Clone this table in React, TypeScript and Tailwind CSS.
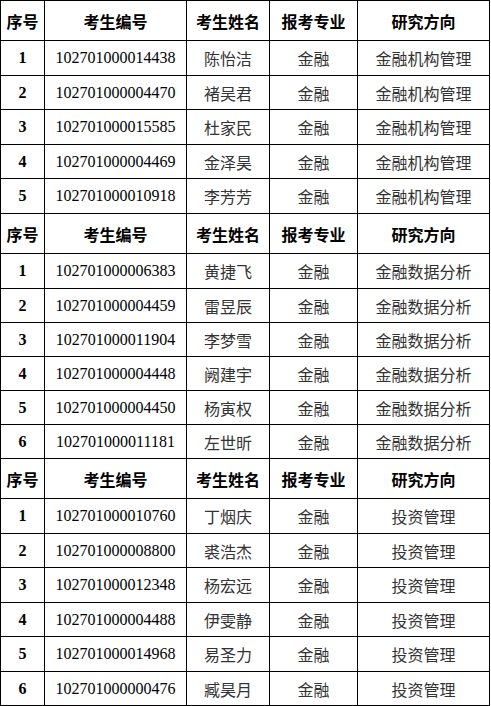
const cols = ["w-[44px]", "w-[142px]", "w-[83px]", "w-[88px]", "w-[132px]"];

type Row = { no: string; id: string; name: string; major: string; dir: string; tall: boolean };

const sections: Row[][] = [
  [
    { no: "1", id: "102701000014438", name: "陈怡洁", major: "金融", dir: "金融机构管理", tall: true },
    { no: "2", id: "102701000004470", name: "褚吴君", major: "金融", dir: "金融机构管理", tall: false },
    { no: "3", id: "102701000015585", name: "杜家民", major: "金融", dir: "金融机构管理", tall: true },
    { no: "4", id: "102701000004469", name: "金泽昊", major: "金融", dir: "金融机构管理", tall: false },
    { no: "5", id: "102701000010918", name: "李芳芳", major: "金融", dir: "金融机构管理", tall: true },
  ],
  [
    { no: "1", id: "102701000006383", name: "黄捷飞", major: "金融", dir: "金融数据分析", tall: true },
    { no: "2", id: "102701000004459", name: "雷昱辰", major: "金融", dir: "金融数据分析", tall: false },
    { no: "3", id: "102701000011904", name: "李梦雪", major: "金融", dir: "金融数据分析", tall: false },
    { no: "4", id: "102701000004448", name: "阙建宇", major: "金融", dir: "金融数据分析", tall: false },
    { no: "5", id: "102701000004450", name: "杨寅权", major: "金融", dir: "金融数据分析", tall: false },
    { no: "6", id: "102701000011181", name: "左世昕", major: "金融", dir: "金融数据分析", tall: false },
  ],
  [
    { no: "1", id: "102701000010760", name: "丁烟庆", major: "金融", dir: "投资管理", tall: true },
    { no: "2", id: "102701000008800", name: "裘浩杰", major: "金融", dir: "投资管理", tall: false },
    { no: "3", id: "102701000012348", name: "杨宏远", major: "金融", dir: "投资管理", tall: true },
    { no: "4", id: "102701000004488", name: "伊雯静", major: "金融", dir: "投资管理", tall: false },
    { no: "5", id: "102701000014968", name: "易圣力", major: "金融", dir: "投资管理", tall: true },
    { no: "6", id: "102701000000476", name: "臧昊月", major: "金融", dir: "投资管理", tall: false },
  ],
];

const headers = ["序号", "考生编号", "考生姓名", "报考专业", "研究方向"];

function HeaderRow() {
  return (
    <div className="flex h-[40px]">
      {headers.map((h, i) => (
        <div
          key={h}
          className={`${cols[i]} flex items-center justify-center border-r border-b border-black text-[16px] font-bold text-black`}
        >
          {h}
        </div>
      ))}
    </div>
  );
}

function DataRow({ row }: { row: Row }) {
  return (
    <div className={`flex ${row.tall ? "h-[35px]" : "h-[34px]"}`}>
      <div className={`${cols[0]} flex items-center justify-center border-r border-b border-black font-['Liberation_Serif',serif] text-[16px] font-bold text-black`}>
        {row.no}
      </div>
      <div className={`${cols[1]} flex items-center justify-center border-r border-b border-black font-['Liberation_Serif',serif] text-[16px] text-black`}>
        {row.id}
      </div>
      <div className={`${cols[2]} flex items-center justify-center border-r border-b border-black text-[16px] text-[#333]`}>
        {row.name}
      </div>
      <div className={`${cols[3]} flex items-center justify-center border-r border-b border-black text-[16px] text-[#333]`}>
        {row.major}
      </div>
      <div className={`${cols[4]} flex items-center justify-center border-r border-b border-black text-[16px] text-[#333]`}>
        {row.dir}
      </div>
    </div>
  );
}

export default function App() {
  return (
    <div className="min-h-[706px] bg-white font-['Noto_Sans_CJK_SC',sans-serif]">
      <div className="inline-flex flex-col border-l border-t border-black">
        {sections.map((rows, s) => (
          <div key={s} className="flex flex-col">
            <HeaderRow />
            {rows.map((r) => (
              <DataRow key={r.id} row={r} />
            ))}
          </div>
        ))}
      </div>
    </div>
  );
}
